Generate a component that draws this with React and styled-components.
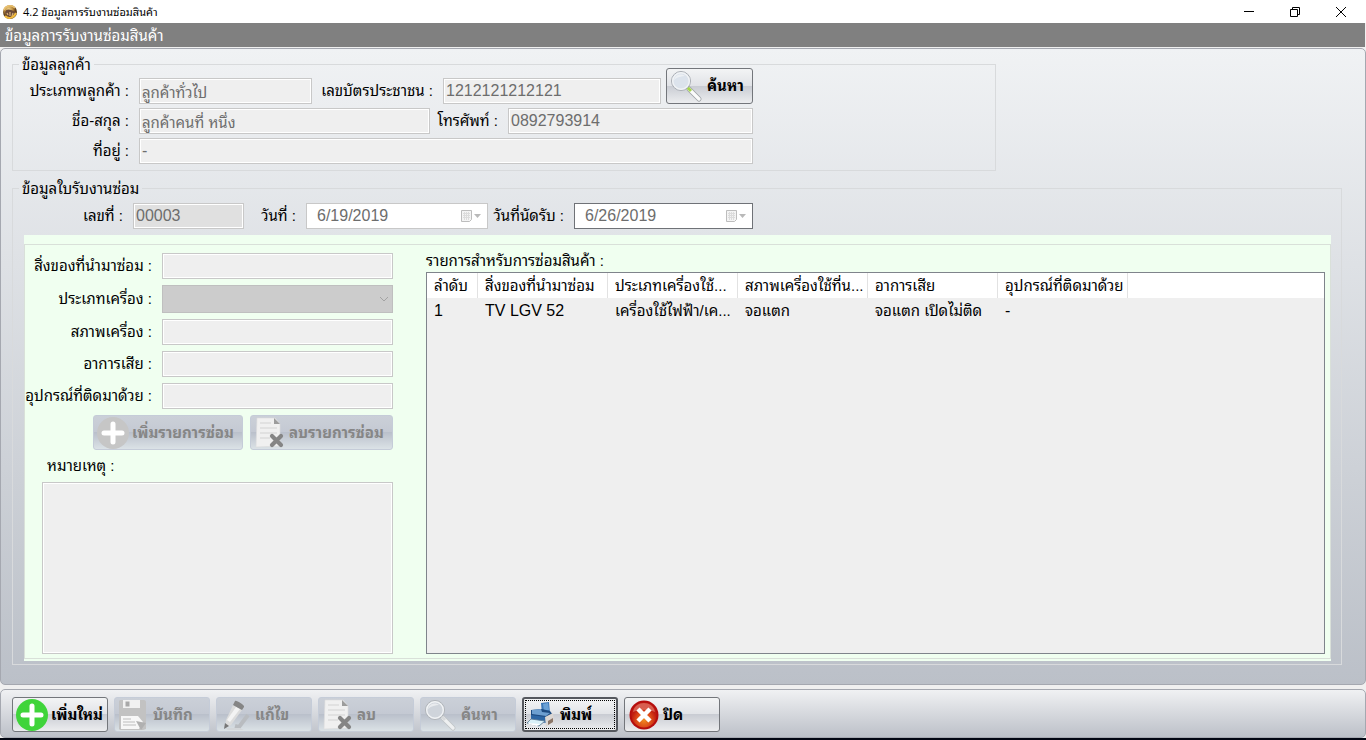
import React from 'react';
import styled, { createGlobalStyle, css } from 'styled-components';

const GlobalStyle = createGlobalStyle`
  * {
    box-sizing: border-box;
  }

  body {
    margin: 0;
    background: #f0f0f0;
  }

  body, button, input, select, textarea, table {
    font-family: "Liberation Sans", "Noto Sans Thai Looped", "Loma", "Garuda", "Noto Sans Thai", sans-serif;
    font-size: 16px;
    color: #000;
  }
`;

const Window = styled.div`
  display: flex;
  flex-direction: column;
  height: 100vh;
  min-height: 700px;
  border-bottom: 2px solid #020612;
`;

const TitleBar = styled.header`
  display: flex;
  align-items: center;
  height: 23px;
  padding: 0 2px;
  background: #fff;
`;

const WindowTitle = styled.h1`
  flex: 1;
  margin: 0 0 0 5px;
  font-family: "Open Sans", "Noto Sans Thai Looped", "Loma", "Garuda", "Noto Sans Thai", sans-serif;
  font-size: 11px;
  font-weight: 400;
  line-height: 20px;
  white-space: nowrap;
`;

const WindowButton = styled.button`
  display: flex;
  align-items: center;
  justify-content: center;
  width: 46px;
  height: 21px;
  padding: 0;
  border: none;
  background: transparent;
`;

const Caption = styled.h2`
  flex: none;
  height: 24px;
  margin: 0 1px 1px 0;
  padding-left: 5px;
  background: #808080;
  color: #fff;
  font-size: 15px;
  font-weight: 400;
  line-height: 26px;
`;

const MainPanel = styled.main`
  flex: 1;
  display: flex;
  flex-direction: column;
  align-items: flex-start;
  gap: 7px;
  padding: 5px 23px 19px 11px;
  border: 1px solid #a5a8b0;
  border-radius: 5px;
  background: linear-gradient(#f0f2f4, #bbc0c8);
`;

const Group = styled.fieldset`
  min-width: 0;
  margin: 0;
  padding: 4px 10px 6px 0;
  border: 1px solid #d8dadc;
  width: ${({ $wide }) => ($wide ? '100%' : '984px')};
  max-width: 100%;

  ${({ $wide }) =>
    $wide &&
    css`
      flex: 1;
      display: flex;
      flex-direction: column;
      padding: 5px 10px 3px 11px;
    `}
`;

const Legend = styled.legend`
  height: 20px;
  margin-left: ${({ $indent }) => $indent}px;
  padding: 0 3px;
  font-size: 15px;
  line-height: 22px;
`;

const CustomerFields = styled.div`
  display: flex;
  flex-direction: column;
  gap: 4px;
  width: 740px;
`;

const Row = styled.div`
  display: flex;
  align-items: center;
`;

const JobRow = styled(Row)`
  margin-bottom: 6px;
`;

const Label = styled.label`
  flex: none;
  width: ${({ $width }) => $width}px;
  padding-right: 10px;
  font-size: 15px;
  line-height: 26px;
  text-align: right;
  white-space: nowrap;
`;

const field = css`
  min-width: 0;
  padding: 0 2px;
  border: 1px solid #c8c8c8;
  border-radius: 0;
  box-shadow: inset 0 0 0 1px #fff;
  background: #efefef;
  color: #6d6d6d;
`;

const Input = styled.input`
  ${field}
  height: 26px;
  width: ${({ $width }) => ($width ? `${$width}px` : 'auto')};
  flex: ${({ $width }) => ($width ? 'none' : 1)};
  background: ${({ $dark }) => ($dark ? '#e0e0e0' : '#efefef')};
  font-size: ${({ $thai }) => ($thai ? 15 : 16)}px;
`;

const DateBox = styled.div`
  display: flex;
  align-items: center;
  width: ${({ $width }) => $width}px;
  height: 26px;
  padding: 0 5px 0 10px;
  border: 1px solid ${({ $strong }) => ($strong ? '#6f7277' : '#c8c8c8')};
  background: #fff;
`;

const DateInput = styled.input`
  flex: 1;
  min-width: 0;
  padding: 0;
  border: none;
  background: transparent;
  color: #6d6d6d;
`;

const SelectBox = styled.div`
  flex: 1;
  display: grid;
  align-items: center;

  > * {
    grid-area: 1 / 1;
  }

  > svg {
    justify-self: end;
    margin-right: 4px;
    pointer-events: none;
  }
`;

const Select = styled.select`
  height: 28px;
  border: 1px solid #bfbfbf;
  border-radius: 0;
  background: #ccc;
  appearance: none;
  opacity: 1;
`;

const Button = styled.button`
  display: flex;
  align-items: center;
  gap: ${({ $gap = 4 }) => $gap}px;
  width: ${({ $width }) => $width}px;
  height: 35px;
  padding: 0 2px;
  border: 1px solid #73767b;
  border-radius: 3px;
  background: linear-gradient(#f3f4f5, #e1e3e7 49%, #c9ccd3 50%, #ecedef);
  font-size: 15px;
  font-weight: 700;
  white-space: nowrap;

  svg {
    flex: none;
  }

  span {
    line-height: 24px;
  }

  &:disabled {
    border-color: #c5ccd8;
    background: linear-gradient(#cbd0d8, #c4c9d3 49%, #bac0cb 50%, #dbe2e6);
    color: #868686;
  }
`;

const SearchButton = styled(Button)`
  height: 36px;
  margin: -10px 0 0 5px;
`;

const FocusedButton = styled(Button)`
  border: 2px solid #55585e;
  padding: 0 2px;
  outline: 1px dotted #000;
  outline-offset: -4px;
`;

const Details = styled.div`
  flex: 1;
  display: flex;
  padding: 9px 0 2px;
  background: #f0fff0;
`;

const DetailsFrame = styled.div`
  flex: 1;
  display: flex;
  min-width: 0;
  padding: 8px 5px 4px 17px;
  border: 1px solid #d9e0d9;
`;

const ItemForm = styled.form`
  display: flex;
  flex-direction: column;
  gap: 6px;
  width: 351px;
  margin-right: 33px;
`;

const FormRow = styled(Row)`
  margin-left: -18px;
`;

const FormButtons = styled.div`
  display: flex;
  justify-content: flex-end;
  gap: 7px;
`;

const NoteLabel = styled.label`
  margin-left: 5px;
  font-size: 15px;
  line-height: 20px;
`;

const Note = styled.textarea`
  ${field}
  flex: 1;
  resize: none;
`;

const ItemList = styled.section`
  flex: 1;
  display: flex;
  flex-direction: column;
  min-width: 0;
`;

const ListTitle = styled.h3`
  height: 19px;
  margin: 0;
  font-size: 15px;
  font-weight: 400;
  line-height: 16px;
`;

const TableBox = styled.div`
  flex: 1;
  border: 1px solid #7f848b;
  background: linear-gradient(#fff 25px, #efefef 25px);
  overflow: hidden;
`;

const Table = styled.table`
  width: 701px;
  table-layout: fixed;
  border-collapse: separate;
  border-spacing: 0;

  th, td {
    height: 25px;
    padding: 0 0 0 7px;
    font-weight: 400;
    line-height: 25px;
    text-align: left;
    white-space: nowrap;
    overflow: hidden;
  }

  th {
    border-right: 1px solid #e2e2e2;
    font-size: 15px;
  }
`;

const Cell = styled.td`
  font-size: ${({ $thai }) => ($thai ? 15 : 16)}px;
`;

const Footer = styled.footer`
  display: flex;
  gap: 6px;
  margin-top: 4px;
  padding: 7px 11px 5px;
  border: 1px solid #a5a8b0;
  border-radius: 5px;
  background: linear-gradient(#f0f1f3, #bcc0c8);
`;

// icons

const AppIcon = () => (
  <svg width="16" height="16" viewBox="0 0 16 16">
    <defs>
      <radialGradient id="globe" cx="40%" cy="30%">
        <stop offset="0" stopColor="#f3d48a" />
        <stop offset="0.6" stopColor="#b9893d" />
        <stop offset="1" stopColor="#5d3c18" />
      </radialGradient>
    </defs>
    <circle cx="8" cy="8" r="7" fill="url(#globe)" />
    <path d="M3 8c1-3 4-3 6-2s4 1 5 3c-1 3-3 4-6 4S4 11 3 8z" fill="#6b4a38" />
    <path d="M5 9l1 2M8 8v4M11 9l-1 3" stroke="#d9b27b" strokeWidth="1.2" />
    <path d="M3 12c3 3 8 3 11-3" stroke="#efb93e" strokeWidth="2" fill="none" />
    <path d="M2 6c1-4 7-6 11-2" stroke="#e9c170" strokeWidth="1.5" fill="none" />
  </svg>
);

const PlusIcon = ({ color = '#3fd43a' }) => (
  <svg width="34" height="34" viewBox="0 0 34 34">
    <circle cx="17" cy="17" r="16" fill={color} />
    <path d="M17 8v18M8 17h18" stroke="#fff" strokeWidth="5" strokeLinecap="round" />
  </svg>
);

const SearchIcon = ({ muted }) => (
  <svg width="34" height="34" viewBox="0 0 34 34">
    <path d="M20 20l10 10" stroke={muted ? '#bfc3c6' : '#9da1a5'} strokeWidth="5" strokeLinecap="round" />
    <path d="M20 20l10 10" stroke={muted ? '#eef0f1' : '#fbfbfb'} strokeWidth="3.4" strokeLinecap="round" />
    <path d="M18 18l4 4" stroke={muted ? '#d8dadc' : '#a6d84a'} strokeWidth="3" />
    <circle cx="12" cy="12" r="9.5" fill={muted ? '#cfd4db' : '#dce3ec'} stroke={muted ? '#b0b4b8' : '#a9adb3'} />
    <circle cx="12" cy="12" r="8.3" fill="none" stroke="#f1f3f5" strokeWidth="1.4" />
    <path d="M5 11c1-5 7-7 11-4-3 0-8 1-11 4z" fill="#f3f5f7" opacity="0.7" />
  </svg>
);

const DeleteIcon = () => (
  <svg width="32" height="32" viewBox="0 0 32 32">
    <path d="M4 1h18l5 6v22l-24 1z" fill="#f0f0f0" stroke="#dcdcdc" strokeWidth="0.6" />
    <path d="M21 1v6h6z" fill="#9c9c9c" />
    <path d="M7 6h11M7 11h17M7 16h17M7 21h10" stroke="#d2d2d2" />
    <path d="M19 19l9 9m0-9l-9 9" stroke="#858585" strokeWidth="4.2" strokeLinecap="round" />
  </svg>
);

const SaveIcon = () => (
  <svg width="32" height="32" viewBox="0 0 32 32">
    <path d="M3 1h24c1 0 2 1 2 2v27l-3 1H3l-1-1V2z" fill="#c2c2c2" />
    <path d="M6 1h17v8H6z" fill="#f1f1f1" />
    <path d="M8.5 2.5h4v5h-4z" fill="#a8a8a8" />
    <path d="M4 17h17l5 6-4 7H4z" fill="#f7f7f7" />
    <path d="M6 20h8M6 23h12M6 26h13" stroke="#bdbdbd" />
    <path d="M19 22l10 2-5 7z" fill="#b0b0b0" />
  </svg>
);

const EditIcon = () => (
  <svg width="32" height="32" viewBox="0 0 32 32">
    <path d="M16 27l4 1 9-12" stroke="#b9bcc0" strokeWidth="4" fill="none" />
    <path d="M6 29h15l4 2H9z" fill="#d3d6d9" />
    <path d="M14 6l9 5-11 15-6 3 1-8z" fill="#dcdcdc" />
    <path d="M17 8L8 21l3 2L21 10z" fill="#f3f3f3" />
    <path d="M16 2c1-1 10 4 9 6l-2 3-9-5z" fill="#858585" />
    <path d="M5 30l1-6 4 3z" fill="#777" />
  </svg>
);

const PrinterIcon = () => (
  <svg width="30" height="30" viewBox="0 0 30 30">
    <path d="M15 3l8-1 1 11-8 1z" fill="#3d78b8" />
    <path d="M17 4l5-1 1 7-5 1z" fill="#6aa0d5" />
    <path d="M5 10l11-1 8 2 3 4-7 4-15-2z" fill="#1c4a80" />
    <path d="M6 10l9-1 1 3 8 1-4 3-14-2z" fill="#6d9fd0" />
    <path d="M5 15l15 2v6L5 20z" fill="#2d66a4" />
    <path d="M19 17l8-4 1 8-8 6z" fill="#dcd7d3" />
    <path d="M22 21l5-3v4l-5 3z" fill="#8b7668" />
    <path d="M5 19l14 2-6 5-12-3z" fill="#d9f0f8" stroke="#597791" strokeWidth="0.8" />
    <path d="M3 23l11 1-3 2-9-2z" fill="#fff" />
  </svg>
);

const CloseIcon = () => (
  <svg width="32" height="32" viewBox="0 0 32 32">
    <defs>
      <radialGradient id="red" cx="50%" cy="70%">
        <stop offset="0" stopColor="#f08a20" />
        <stop offset="0.6" stopColor="#dc4a18" />
        <stop offset="1" stopColor="#c01c10" />
      </radialGradient>
    </defs>
    <circle cx="17" cy="16" r="14.5" fill="#b50d0d" />
    <circle cx="17" cy="16" r="12.5" fill="url(#red)" />
    <path d="M6 13C8 1 26 1 28 13 21 10 13 10 6 13z" fill="#f0a090" opacity="0.5" />
    <path d="M11 10l12 12m0-12L11 22" stroke="#fff" strokeWidth="4.5" />
  </svg>
);

const CalendarIcon = () => (
  <svg width="22" height="14" viewBox="0 0 22 14">
    <path d="M1.5 1.5h10v9l-2 2h-8z" fill="#f4f4f4" stroke="#bdbdbd" />
    <path d="M3 4.5h7M3 6.5h7M3 8.5h7M4.5 3v8M6.5 3v8M8.5 3v8" stroke="#dcdcdc" />
    <path d="M14 5h7l-3.5 4z" fill="#b9b9b9" />
  </svg>
);

const items = [
  ['1', 'TV LGV 52', 'เครื่องใช้ไฟฟ้า/เค...', 'จอแตก', 'จอแตก เปิดไม่ติด', '-'],
];

const columns = [
  { title: 'ลำดับ', width: 51 },
  { title: 'สิ่งของที่นำมาซ่อม', width: 130 },
  { title: 'ประเภทเครื่องใช้...', width: 130, thai: true },
  { title: 'สภาพเครื่องใช้ที่น...', width: 130, thai: true },
  { title: 'อาการเสีย', width: 130, thai: true },
  { title: 'อุปกรณ์ที่ติดมาด้วย', width: 130 },
];

const App = () => {
  return (
    <>
      <GlobalStyle />
      <Window>
        <TitleBar>
          <AppIcon />
          <WindowTitle>4.2 ข้อมูลการรับงานซ่อมสินค้า</WindowTitle>
          <WindowButton aria-label="Minimize">
            <svg width="12" height="12"><path d="M1 5.5h10" stroke="#000" /></svg>
          </WindowButton>
          <WindowButton aria-label="Restore">
            <svg width="12" height="12" fill="none" stroke="#000">
              <path d="M1.5 3.5h7v7h-7zM3.5 3V1.5h7v7H9" />
            </svg>
          </WindowButton>
          <WindowButton aria-label="Close">
            <svg width="12" height="12"><path d="M1 1l10 10M11 1L1 11" stroke="#000" /></svg>
          </WindowButton>
        </TitleBar>
        <Caption>ข้อมูลการรับงานซ่อมสินค้า</Caption>

        <MainPanel>
          <Group>
            <Legend $indent={6}>ข้อมูลลูกค้า</Legend>
            <CustomerFields>
              <Row>
                <Label htmlFor="type" $width={126}>ประเภทพลูกค้า :</Label>
                <Input id="type" $width={173} $thai defaultValue="ลูกค้าทั่วไป" disabled />
                <Label htmlFor="card" $width={131}>เลขบัตรประชาชน :</Label>
                <Input id="card" defaultValue="1212121212121" disabled />
                <SearchButton type="button" $width={87}>
                  <SearchIcon />
                  <span>ค้นหา</span>
                </SearchButton>
              </Row>
              <Row>
                <Label htmlFor="name" $width={126}>ชื่อ-สกุล :</Label>
                <Input id="name" $width={291} $thai defaultValue="ลูกค้าคนที่ หนึ่ง" disabled />
                <Label htmlFor="phone" $width={78}>โทรศัพท์ :</Label>
                <Input id="phone" defaultValue="0892793914" disabled />
              </Row>
              <Row>
                <Label htmlFor="address" $width={126}>ที่อยู่ :</Label>
                <Input id="address" defaultValue="-" disabled />
              </Row>
            </CustomerFields>
          </Group>

          <Group $wide>
            <Legend $indent={-5}>ข้อมูลใบรับงานซ่อม</Legend>
            <JobRow>
              <Label htmlFor="number" $width={109}>เลขที่ :</Label>
              <Input id="number" $width={111} $dark defaultValue="00003" disabled />
              <Label htmlFor="date" $width={62}>วันที่ :</Label>
              <DateBox $width={182}>
                <DateInput id="date" defaultValue="6/19/2019" disabled />
                <CalendarIcon />
              </DateBox>
              <Label htmlFor="due" $width={86}>วันที่นัดรับ :</Label>
              <DateBox $width={179} $strong>
                <DateInput id="due" defaultValue="6/26/2019" disabled />
                <CalendarIcon />
              </DateBox>
            </JobRow>

            <Details>
              <DetailsFrame>
                <ItemForm>
                  <FormRow>
                    <Label htmlFor="item" $width={138}>สิ่งของที่นำมาซ่อม :</Label>
                    <Input id="item" disabled />
                  </FormRow>
                  <FormRow>
                    <Label htmlFor="kind" $width={138}>ประเภทเครื่อง :</Label>
                    <SelectBox>
                      <Select id="kind" disabled />
                      <svg width="10" height="8" fill="none" stroke="#a3a3a3"><path d="M1 2l4 4 4-4" /></svg>
                    </SelectBox>
                  </FormRow>
                  <FormRow>
                    <Label htmlFor="condition" $width={138}>สภาพเครื่อง :</Label>
                    <Input id="condition" disabled />
                  </FormRow>
                  <FormRow>
                    <Label htmlFor="fault" $width={138}>อาการเสีย :</Label>
                    <Input id="fault" disabled />
                  </FormRow>
                  <FormRow>
                    <Label htmlFor="parts" $width={138}>อุปกรณ์ที่ติดมาด้วย :</Label>
                    <Input id="parts" disabled />
                  </FormRow>
                  <FormButtons>
                    <Button type="button" $width={150} $gap={2} disabled>
                      <PlusIcon color="#c6c6c6" />
                      <span>เพิ่มรายการซ่อม</span>
                    </Button>
                    <Button type="button" $width={143} disabled>
                      <DeleteIcon />
                      <span>ลบรายการซ่อม</span>
                    </Button>
                  </FormButtons>
                  <NoteLabel htmlFor="note">หมายเหตุ :</NoteLabel>
                  <Note id="note" disabled />
                </ItemForm>

                <ItemList>
                  <ListTitle>รายการสำหรับการซ่อมสินค้า :</ListTitle>
                  <TableBox>
                    <Table>
                      <colgroup>
                        {columns.map((col) => (
                          <col key={col.title} width={col.width} />
                        ))}
                      </colgroup>
                      <thead>
                        <tr>
                          {columns.map((col) => (
                            <th key={col.title} scope="col">{col.title}</th>
                          ))}
                        </tr>
                      </thead>
                      <tbody>
                        {items.map((item) => (
                          <tr key={item[0]}>
                            {item.map((cell, i) => (
                              <Cell key={columns[i].title} $thai={columns[i].thai}>{cell}</Cell>
                            ))}
                          </tr>
                        ))}
                      </tbody>
                    </Table>
                  </TableBox>
                </ItemList>
              </DetailsFrame>
            </Details>
          </Group>
        </MainPanel>

        <Footer>
          <Button type="button" $width={96} $gap={2}>
            <PlusIcon />
            <span>เพิ่มใหม่</span>
          </Button>
          <Button type="button" $width={96} disabled>
            <SaveIcon />
            <span>บันทึก</span>
          </Button>
          <Button type="button" $width={96} disabled>
            <EditIcon />
            <span>แก้ไข</span>
          </Button>
          <Button type="button" $width={96} disabled>
            <DeleteIcon />
            <span>ลบ</span>
          </Button>
          <Button type="button" $width={96} disabled>
            <SearchIcon muted />
            <span>ค้นหา</span>
          </Button>
          <FocusedButton type="button" $width={96}>
            <PrinterIcon />
            <span>พิมพ์</span>
          </FocusedButton>
          <Button type="button" $width={96}>
            <CloseIcon />
            <span>ปิด</span>
          </Button>
        </Footer>
      </Window>
    </>
  );
};

export default App;
